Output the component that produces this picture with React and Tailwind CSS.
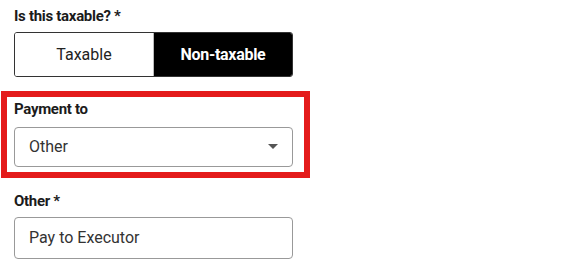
export default function App() {
  return (
    <div className="w-[586px] h-[275px] bg-white text-[#1b1b1b]" style={{ fontFamily: "Roboto, 'Liberation Sans', sans-serif" }}>
      <div className="pl-[14px] pt-[7px]">
        <div className="text-[15px] font-bold leading-[18px] tracking-[-0.3px]">Is this taxable? *</div>
        <div className="mt-[7px] w-[279px] h-[45px] flex border border-[#333] rounded-[3px] overflow-hidden">
          <div className="w-[139px] flex items-center justify-center text-[16px] text-[#222] bg-white border-r border-[#bbb]">Taxable</div>
          <div className="flex-1 flex items-center justify-center text-[16px] font-bold text-white bg-black tracking-[-0.3px]">Non-taxable</div>
        </div>
      </div>
      <div className="ml-[1px] mt-[14px] w-[309px] h-[87px] border-[6px] border-[#e41b1b] pl-[7px] pt-[3px]">
        <div className="text-[15px] font-bold leading-[18px] tracking-[-0.3px]">Payment to</div>
        <div className="mt-[9px] w-[279px] h-[40px] border border-[#999] rounded-[4px] flex items-center justify-between pl-[14px] pr-[14px]">
          <span className="text-[16px] text-[#333]">Other</span>
          <svg width="10" height="6" viewBox="0 0 10 6"><path d="M0 0 L10 0 L5 5 Z" fill="#555" /></svg>
        </div>
      </div>
      <div className="pl-[14px] pt-[14px]">
        <div className="text-[15px] font-bold leading-[18px] tracking-[-0.3px]">Other *</div>
        <div className="mt-[7px] w-[279px] h-[42px] border border-[#999] rounded-[4px] flex items-center pl-[14px]">
          <span className="text-[16px] text-[#333]">Pay to Executor</span>
        </div>
      </div>
    </div>
  );
}
